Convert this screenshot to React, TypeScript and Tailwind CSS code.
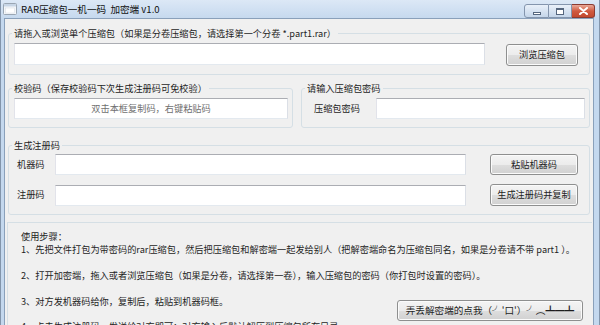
import React from 'react'

const btn =
  'flex items-center justify-center rounded-[3px] border border-[#8e8f8f] bg-[linear-gradient(to_bottom,#f4f4f4_0%,#ececec_50%,#dedede_50%,#d1d1d1_100%)] text-[#1e1e1e] shadow-[inset_0_0_0_1px_#fbfbfb]'

const input =
  'bg-white border border-[#abadb3] border-l-[#e2e3ea] border-r-[#dbdfe6] border-b-[#e3e9ef]'

const group = 'border border-[#d5dfe5] rounded-[3px]'

function AppIcon() {
  return (
    <svg width="14" height="14" viewBox="0 0 14 14">
      <rect x="0.5" y="1.5" width="13" height="11" rx="1" fill="#f4f6f8" stroke="#9aa6b3" />
      <rect x="1" y="2" width="12" height="2.5" fill="#c8d6e6" />
      <rect x="2.5" y="6" width="9" height="5" fill="#ffffff" stroke="#d4dbe3" strokeWidth="0.5" />
    </svg>
  )
}

export default function App() {
  return (
    <div className="w-[600px] h-[325px] overflow-hidden flex flex-col bg-[#c4d8ee] border-l border-r border-[#8395ab] font-['Noto_Sans_CJK_SC','Noto_Sans',sans-serif] text-[9.2px] text-[#1e1e1e]">
      {/* Title bar */}
      <div className="h-[20px] flex items-center bg-linear-to-b from-[#dce8f6] to-[#c6d9ee] pl-[2px]">
        <AppIcon />
        <span className="ml-[4px] text-[9.6px] leading-[12px] text-[#111]">RAR压缩包一机一码&nbsp;&nbsp;加密端 v1.0</span>
        <div className="ml-auto mr-[4px] flex items-stretch self-start mt-[4px] h-[14px]">
          <div className="w-[25px] flex items-center justify-center rounded-l-[3px] border border-[#8495ad] bg-linear-to-b from-[#e9f0f9] to-[#c5d6ea]">
            <div className="w-[8px] h-[3px] bg-white border border-[#55667e] mt-[4px]" />
          </div>
          <div className="w-[23px] flex items-center justify-center border-y border-r border-[#8495ad] bg-linear-to-b from-[#e9f0f9] to-[#c5d6ea]">
            <div className="w-[8px] h-[7px] border border-[#55667e] border-t-2 bg-white" />
          </div>
          <div className="w-[23px] flex items-center justify-center rounded-r-[3px] border-y border-r border-[#8a3b32] bg-linear-to-b from-[#e9a99a] via-[#d05a40] to-[#c34a2f]">
            <svg width="9" height="8" viewBox="0 0 9 8">
              <path d="M1 1 L8 7 M8 1 L1 7" stroke="#fff" strokeWidth="2" strokeLinecap="round" />
            </svg>
          </div>
        </div>
      </div>

      {/* Client area */}
      <div className="flex-1 ml-[3px] mr-[5px] bg-[#f0f0f0] border-l border-t border-r border-[#8aa0ba] flex flex-col">
        {/* Archive */}
        <fieldset className={`${group} ml-[3px] w-[582px] mt-[8px] px-[3px] pt-[4px] pb-[8px]`}>
          <legend className="px-[2px] leading-[12px]">请拖入或浏览单个压缩包（如果是分卷压缩包，请选择第一个分卷 *.part1.rar）</legend>
          <div className="flex items-start">
            <div className={`${input} ml-[2px] w-[471px] h-[22px]`} />
            <button className={`${btn} ml-[21px] mt-[1px] w-[72px] h-[22px]`}>浏览压缩包</button>
          </div>
        </fieldset>

        {/* Check code + password */}
        <div className="flex mt-[7px]">
          <fieldset className={`${group} ml-[3px] w-[285px] px-[3px] pt-[4px] pb-[8px]`}>
            <legend className="px-[2px] leading-[12px]">校验码（保存校验码下次生成注册码可免校验）</legend>
            <div className={`${input} ml-[2px] w-[274px] h-[21px] flex items-center justify-center text-[#6f6f6f]`}>
              双击本框复制码，右键粘贴码
            </div>
          </fieldset>
          <fieldset className={`${group} ml-[8px] w-[289px] px-[3px] pt-[4px] pb-[8px]`}>
            <legend className="px-[2px] leading-[12px]">请输入压缩包密码</legend>
            <div className="flex items-center">
              <span className="ml-[9px] w-[62px]">压缩包密码</span>
              <div className={`${input} w-[209px] h-[21px]`} />
            </div>
          </fieldset>
        </div>

        {/* Register code */}
        <fieldset className={`${group} ml-[3px] w-[582px] mt-[11px] px-[3px] pt-[3px] pb-[8px]`}>
          <legend className="px-[2px] leading-[12px]">生成注册码</legend>
          <div className="flex flex-col gap-[9px]">
            <div className="flex items-center">
              <span className="w-[43px] pl-[5px]">机器码</span>
              <div className={`${input} w-[411px] h-[21px]`} />
              <button className={`${btn} ml-[24px] w-[88px] h-[21px]`}>粘贴机器码</button>
            </div>
            <div className="flex items-center">
              <span className="w-[43px] pl-[5px]">注册码</span>
              <div className={`${input} w-[411px] h-[21px]`} />
              <button className={`${btn} ml-[24px] w-[88px] h-[22px]`}>生成注册码并复制</button>
            </div>
          </div>
        </fieldset>

        {/* Steps */}
        <div className="relative ml-[2px] w-[585px] mt-[7px] flex-1 border-l border-t border-[#d5dfe5] pl-[13px] pt-[7px] leading-[12.9px] whitespace-pre">
          <div>使用步骤：</div>
          <div>1、先把文件打包为带密码的rar压缩包，然后把压缩包和解密端一起发给别人（把解密端命名为压缩包同名，如果是分卷请不带 part1 ）。</div>
          <div>&nbsp;</div>
          <div>2、打开加密端，拖入或者浏览压缩包（如果是分卷，请选择第一卷），输入压缩包的密码（你打包时设置的密码）。</div>
          <div>&nbsp;</div>
          <div>3、对方发机器码给你，复制后，粘贴到机器码框。</div>
          <div>&nbsp;</div>
          <div>4、点击生成注册码，发送给对方即可；对方输入后默认解压到压缩包所在目录。</div>
          <button className={`${btn} absolute left-[389px] top-[77px] w-[186px] h-[21px] text-[9.6px]`}>
            弄丢解密端的点我（╯'口'）╯︵┻━┻
          </button>
        </div>
      </div>
    </div>
  )
}
